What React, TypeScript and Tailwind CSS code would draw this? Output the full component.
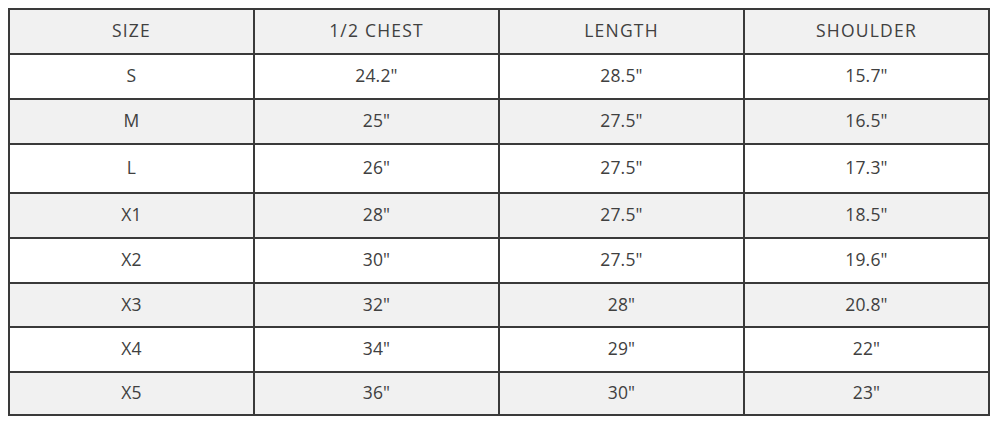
const header = ["SIZE", "1/2 CHEST", "LENGTH", "SHOULDER"];

const rows = [
  ["S", '24.2"', '28.5"', '15.7"'],
  ["M", '25"', '27.5"', '16.5"'],
  ["L", '26"', '27.5"', '17.3"'],
  ["X1", '28"', '27.5"', '18.5"'],
  ["X2", '30"', '27.5"', '19.6"'],
  ["X3", '32"', '28"', '20.8"'],
  ["X4", '34"', '29"', '22"'],
  ["X5", '36"', '30"', '23"'],
];

const heights = ["h-[45px]", "h-[45px]", "h-[45px]", "h-[49px]", "h-[45px]", "h-[45px]", "h-[44px]", "h-[45px]", "h-[43px]"];

export default function App() {
  return (
    <div className="w-[1000px] h-[424px] bg-white pl-[8px] pt-[8px] font-['Open_Sans',sans-serif] text-[#404040]">
      <table className="w-[982px] border-collapse table-fixed text-[17.5px]">
        <tbody>
          <tr className={`bg-[#f1f1f1] ${heights[0]}`}>
            {header.map((h, i) => (
              <td key={i} className="border-2 border-[#3a3a3a] text-center align-middle p-0 pb-[2px] tracking-[1.2px]">
                {h}
              </td>
            ))}
          </tr>
          {rows.map((r, i) => (
            <tr key={i} className={`${i % 2 === 0 ? "bg-white" : "bg-[#f1f1f1]"} ${heights[i + 1]}`}>
              {r.map((c, j) => (
                <td key={j} className="border-2 border-[#3a3a3a] text-center align-middle p-0 pb-[2px] tracking-[0.2px]">
                  {c}
                </td>
              ))}
            </tr>
          ))}
        </tbody>
      </table>
    </div>
  );
}
